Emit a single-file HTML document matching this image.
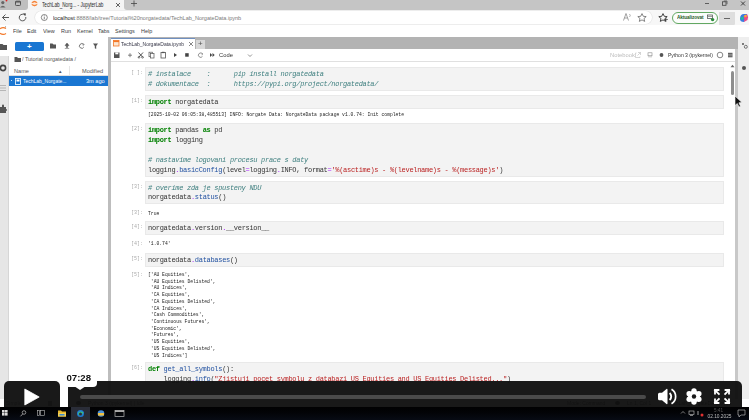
<!DOCTYPE html>
<html><head><meta charset="utf-8">
<style>
*{margin:0;padding:0;box-sizing:border-box}
html,body{width:749px;height:420px;overflow:hidden;background:#fff;font-family:"Liberation Sans",sans-serif;position:relative}
.a{position:absolute}
.mi{position:absolute;top:27px;font-size:6.2px;color:#3a3a3a;white-space:nowrap;transform:scaleX(0.88);transform-origin:0 0}
.cell{position:absolute;left:145px;width:579px;background:#f3f3f3;border:1px solid #e9e9e9}
.ln{position:absolute;left:148px;font-family:"Liberation Mono",monospace;font-size:7px;letter-spacing:-0.3px;color:#333;white-space:pre;line-height:8px;height:8px;transform:scaleY(1.12);transform-origin:0 50%}
.pr{position:absolute;font-family:"Liberation Mono",monospace;font-size:5px;color:#aaa;white-space:pre;line-height:6px}
.o{position:absolute;left:148px;font-family:"Liberation Mono",monospace;font-size:4.7px;color:#222;white-space:pre;line-height:6px}
.kw{color:#008000;font-weight:bold}
.cm{color:#408080;font-style:italic}
.fn{color:#2050a0}
.st{color:#ba2121}
.op{color:#aa22ff}
</style></head><body><div style="position:absolute;left:0;top:0;width:749px;height:420px;filter:blur(0.35px)">
<!-- ============ browser chrome ============ -->
<div class="a" style="left:0;top:0;width:749px;height:10px;background:#f3f3f3"></div>
<div class="a" style="left:124px;top:0;width:625px;height:9.5px;background:#c5c5c5;border-radius:0 0 0 3px"></div>
<div class="a" style="left:0;top:0;width:28px;height:9.5px;background:#bfbfbf;border-radius:0 0 3px 0"></div>
<div class="a" style="left:28px;top:0;width:96px;height:10px;background:#f4f4f4"></div>
<svg class="a" style="left:0;top:0" width="28" height="9" viewBox="0 0 28 9">
 <circle cx="2.8" cy="2.6" r="1.6" fill="#666"/>
 <path d="M0 7.5 Q2.8 3.8 5.6 7.5 Z" fill="#666"/>
 <circle cx="6.5" cy="0.6" r="0.9" fill="#e02020"/>
 <rect x="15.5" y="1.2" width="5" height="4.3" rx="0.8" fill="none" stroke="#555" stroke-width="1"/>
 <rect x="15.5" y="1.2" width="5" height="1.3" fill="#555"/>
</svg>

<svg class="a" style="left:31px;top:0" width="7" height="7" viewBox="0 0 7 7">
 <circle cx="3.5" cy="3.5" r="3" fill="#fde8d8"/>
 <path d="M0.8 2.6 Q3.5 0 6.2 2.6 Q3.5 1.3 0.8 2.6Z" fill="#f37726" stroke="#f37726" stroke-width="0.6"/>
 <path d="M0.8 4.6 Q3.5 7.2 6.2 4.6 Q3.5 5.9 0.8 4.6Z" fill="#f37726" stroke="#f37726" stroke-width="0.6"/>
</svg>
<div class="a" style="left:41.5px;top:0.6px;font-size:6.4px;color:#2a2a2a;white-space:nowrap;transform:scaleX(0.73);transform-origin:0 0">TechLab_Norg... - JupyterLab</div>
<svg class="a" style="left:114.5px;top:1.5px" width="6" height="6" viewBox="0 0 6 6"><path d="M1 1 L5 5 M5 1 L1 5" stroke="#333" stroke-width="0.75"/></svg>

<svg class="a" style="left:130px;top:0" width="8" height="8" viewBox="0 0 8 8"><path d="M4 0.5 V6.5 M1 3.5 H7" stroke="#444" stroke-width="0.8"/></svg>
<svg class="a" style="left:700px;top:0" width="49" height="9" viewBox="0 0 49 9">
 <path d="M5 3.5 H9" stroke="#444" stroke-width="0.8"/>
 <rect x="22.5" y="1.8" width="3.5" height="3.5" fill="none" stroke="#444" stroke-width="0.8"/>
 <path d="M23.8 1 H27 V4.2" fill="none" stroke="#444" stroke-width="0.7"/>
 <path d="M41 1.5 L45 5.5 M45 1.5 L41 5.5" stroke="#333" stroke-width="0.9"/>
</svg>
<div class="a" style="left:0;top:9.5px;width:749px;height:15.5px;background:#f7f7f7"></div>
<svg class="a" style="left:0;top:9px" width="35" height="16" viewBox="0 0 35 16">
 <path d="M2.5 8.5 H9 M2.5 8.5 L5.5 5.5 M2.5 8.5 L5.5 11.5" stroke="#444" stroke-width="0.9" fill="none"/>
 <path d="M25.8 8 A3.3 3.3 0 1 1 23.6 5.4" stroke="#444" stroke-width="0.9" fill="none"/>
 <path d="M23 4.2 L26 4.6 L25.2 7.2Z" fill="#444"/>
</svg>
<div class="a" style="left:35px;top:11px;width:617px;height:13px;background:#fff;border-radius:6.5px;box-shadow:0 0 0 0.6px #e4e4e4"></div>
<svg class="a" style="left:40px;top:13px" width="9" height="9" viewBox="0 0 9 9">
 <circle cx="4.3" cy="4.5" r="3" fill="none" stroke="#555" stroke-width="0.7"/>
 <path d="M4.3 3.6 V6.3" stroke="#555" stroke-width="0.7"/>
 <circle cx="4.3" cy="2.7" r="0.4" fill="#555"/>
</svg>
<div class="a" style="left:53px;top:14px;font-size:6.1px;color:#7a7a7a;white-space:nowrap;transform:scaleX(0.91);transform-origin:0 0"><span style="color:#1a1a1a">localhost</span>:8888/lab/tree/Tutorial%20norgatedata/TechLab_NorgateData.ipynb</div>
<svg class="a" style="left:620px;top:11px" width="130" height="14" viewBox="0 0 130 14">
 <path d="M3.5 9.5 L6 2.5 L8.5 9.5 M4.5 7 H7.5" stroke="#666" stroke-width="0.6" fill="none"/>
 <path d="M9.5 3 Q11 4.5 9.5 6" stroke="#666" stroke-width="0.5" fill="none"/>
 <path d="M22 2.6 L23.3 5.3 L26.2 5.6 L24 7.5 L24.7 10.4 L22 8.9 L19.3 10.4 L20 7.5 L17.8 5.6 L20.7 5.3 Z" fill="none" stroke="#555" stroke-width="0.7"/>
 <path d="M43 2.6 L44.3 5.3 L47.2 5.6 L45 7.5 L45.7 10.4 L43 8.9 L40.3 10.4 L41 7.5 L38.8 5.6 L41.7 5.3 Z" fill="none" stroke="#333" stroke-width="0.9"/>
 <path d="M44 8.5 H48 M46 6.5 V10.5" stroke="#333" stroke-width="0.6"/>
</svg>
<div class="a" style="left:672px;top:11.5px;width:46px;height:12px;border:0.8px solid #62a862;border-radius:6px;background:#fbfdfb"></div>
<div class="a" style="left:677px;top:14.3px;font-size:5.6px;font-weight:bold;color:#1f5a1f;white-space:nowrap;letter-spacing:-0.1px;transform:scaleX(0.83);transform-origin:0 0">Aktualizovat</div>
<svg class="a" style="left:707px;top:14px" width="8" height="8" viewBox="0 0 8 8">
 <rect x="0.5" y="1" width="5" height="3.5" fill="none" stroke="#444" stroke-width="0.7"/>
 <path d="M1 2.5 H5" stroke="#444" stroke-width="0.5"/>
 <circle cx="5.6" cy="5.6" r="1.7" fill="#2a8a3a"/>
</svg>
<div class="a" style="left:719px;top:12px;width:16px;height:13px;background:#dedede"></div>
<div class="a" style="left:724px;top:17.5px;width:6px;height:0.7px;background:#666"></div>
<div class="a" style="left:734px;top:24px;width:1px;height:6px;background:#e6e6e6"></div>
<svg class="a" style="left:739px;top:13px" width="10" height="10" viewBox="0 0 10 10">
 <path d="M1 6 Q1 1 5 1 L8 1 Q9 3 7 5 L5 9 Q1 9 1 6Z" fill="#3b7be0"/>
 <path d="M8 1 Q10 4 8.5 7 L5 9 Q6 5 4 4Z" fill="#e84c8a"/>
 <path d="M1 6 Q2 3 5 4 L4 7Z" fill="#22b8a0"/>
 <circle cx="6.5" cy="3" r="1.3" fill="#f8b030"/>
</svg>
<div class="a" style="left:0;top:25px;width:749px;height:12px;background:#fff"></div>
<svg class="a" style="left:0;top:26px" width="7" height="10" viewBox="0 0 7 10">
 <path d="M0 2.8 Q3 0.6 6 2.6" stroke="#f37726" stroke-width="1.2" fill="none"/>
 <path d="M0 7.2 Q3 9.4 6 7.4" stroke="#f37726" stroke-width="1.2" fill="none"/>
 <circle cx="5.5" cy="0.8" r="0.6" fill="#888"/>
</svg>
<div class="mi" style="left:13px">File</div>
<div class="mi" style="left:27px">Edit</div>
<div class="mi" style="left:43px">View</div>
<div class="mi" style="left:61px">Run</div>
<div class="mi" style="left:77px">Kernel</div>
<div class="mi" style="left:98px">Tabs</div>
<div class="mi" style="left:115px">Settings</div>
<div class="mi" style="left:141px">Help</div>

<!-- ============ jupyter layout ============ -->
<div class="a" style="left:0;top:37px;width:9px;height:370px;background:#e6e6e6;border-right:1px solid #d6d6d6"></div>
<div class="a" style="left:0;top:37px;width:9px;height:19px;background:#fff"></div>
<svg class="a" style="left:0;top:37px" width="9" height="90" viewBox="0 0 9 90">
 <path d="M0 7 H2.5 L3.5 8 H7 V13 H0Z" fill="#555"/>
 <circle cx="3" cy="31" r="2.6" fill="none" stroke="#444" stroke-width="1.6"/>
 <path d="M0 48.5 H6 M0 51 H6 M0 53.5 H6" stroke="#aaa" stroke-width="0.8"/>
 <path d="M0 70 H2 V68.5 A1 1 0 0 1 4 68.5 V70 H6 V72 A1 1 0 0 1 6 74 V76 H0Z" fill="#555"/>
</svg>
<div class="a" style="left:9px;top:37px;width:99px;height:370px;background:#fff"></div>
<div class="a" style="left:15px;top:42px;width:29px;height:8.5px;background:#1976d2;border-radius:1.5px"></div>
<div class="a" style="left:27px;top:41.5px;font-size:8px;font-weight:bold;color:#fff;line-height:9px">+</div>
<svg class="a" style="left:48px;top:41px" width="52" height="10" viewBox="0 0 52 10">
 <path d="M2 2.5 H4.5 L5.5 3.5 H8 V7.5 H2Z" fill="#555"/>
 <path d="M19 2 L17 4.5 H18.3 V6.5 H19.7 V4.5 H21Z M16.8 7.5 H21.2" fill="#555" stroke="#555" stroke-width="0.5"/>
 <path d="M35.5 3.5 A2.3 2.3 0 1 0 35.8 6" stroke="#555" stroke-width="0.8" fill="none"/>
 <path d="M34.5 2.5 L36.2 3.3 L35 4.8" stroke="#555" stroke-width="0.6" fill="none"/>
 <path d="M45 2.5 H50 L48.2 5 V8 L46.8 7.3 V5Z" fill="#555"/>
</svg>
<svg class="a" style="left:14px;top:56px" width="8" height="7" viewBox="0 0 8 7">
 <path d="M0.5 1 H3 L4 2 H7 V6 H0.5Z" fill="#555"/>
</svg>
<div class="a" style="left:22px;top:56.2px;font-size:6px;color:#555;white-space:nowrap;transform:scaleX(0.9);transform-origin:0 0">/ Tutorial norgatedata /</div>
<div class="a" style="left:14px;top:68px;font-size:5.6px;color:#555;white-space:nowrap">Name</div>
<div class="a" style="left:58px;top:68.5px;font-size:4.5px;color:#555">&#9650;</div>
<div class="a" style="left:69px;top:66px;width:1px;height:9px;background:#e6e6e6"></div>
<div class="a" style="left:82px;top:68px;font-size:5.6px;color:#555;white-space:nowrap">Modified</div>
<div class="a" style="left:9px;top:75px;width:99px;height:1px;background:#e0e0e0"></div>
<div class="a" style="left:9px;top:76px;width:99px;height:10px;background:#1976d2"></div>
<div class="a" style="left:11px;top:80px;width:1.4px;height:1.4px;background:#fff;border-radius:1px"></div>
<svg class="a" style="left:15px;top:77.5px" width="6" height="7" viewBox="0 0 6 7">
 <rect x="0.5" y="0.5" width="5" height="6" fill="none" stroke="#fff" stroke-width="0.8"/>
 <rect x="1.5" y="1.5" width="3" height="2" fill="#fff"/>
</svg>
<div class="a" style="left:23px;top:78px;font-size:5.6px;color:#fff;white-space:nowrap;transform:scaleX(0.89);transform-origin:0 0">TechLab_Norgate...</div>
<div class="a" style="left:86px;top:78px;font-size:5.6px;color:#fff;white-space:nowrap">3m ago</div>

<div class="a" style="left:108px;top:37px;width:3px;height:370px;background:#bdbdbd"></div>
<div class="a" style="left:111px;top:36.5px;width:627px;height:12.5px;background:#b3b3b3"></div>
<div class="a" style="left:111px;top:38px;width:84px;height:11px;background:#fff;border-top:1.2px solid #6f8fbf"></div>
<svg class="a" style="left:113px;top:40px" width="7" height="7" viewBox="0 0 7 7">
 <rect x="0.5" y="0.5" width="5.5" height="5.5" fill="#fbe5d0" stroke="#f37726" stroke-width="0.8"/>
 <rect x="0.5" y="0.5" width="5.5" height="1.6" fill="#f37726"/>
</svg>
<div class="a" style="left:121px;top:40.8px;font-size:6px;color:#334;white-space:nowrap;transform:scaleX(0.83);transform-origin:0 0">TechLab_NorgateData.ipynb</div>
<svg class="a" style="left:187.5px;top:41px" width="6" height="6" viewBox="0 0 6 6"><path d="M1 1 L5 5 M5 1 L1 5" stroke="#555" stroke-width="0.7"/></svg>
<div class="a" style="left:196px;top:40px;width:9px;height:8.5px;background:#d8d8d8"></div>
<div class="a" style="left:198px;top:39px;font-size:8px;color:#555;line-height:9px">+</div>
<svg class="a" style="left:111px;top:49px" width="150" height="12" viewBox="0 0 150 12">
 <rect x="3" y="3.5" width="5.5" height="5.5" fill="#555"/>
 <rect x="4.3" y="3.5" width="3" height="1.8" fill="#fff"/>
 <path d="M17 6.2 H21 M19 4.2 V8.2" stroke="#666" stroke-width="0.8"/>
 <path d="M27.5 3.5 L32 8.5 M32 3.5 L27.5 8.5" stroke="#444" stroke-width="0.9"/>
 <circle cx="28" cy="8.3" r="0.9" fill="none" stroke="#444" stroke-width="0.6"/>
 <circle cx="31.5" cy="8.3" r="0.9" fill="none" stroke="#444" stroke-width="0.6"/>
 <rect x="38" y="3.2" width="3.5" height="4.5" fill="none" stroke="#555" stroke-width="0.7"/>
 <rect x="39.5" y="4.5" width="3.5" height="4.5" fill="#fff" stroke="#555" stroke-width="0.7"/>
 <rect x="50" y="3.5" width="4.5" height="5.5" fill="none" stroke="#555" stroke-width="0.8"/>
 <rect x="51" y="2.8" width="2.5" height="1.3" fill="#555"/>
 <path d="M63 4 L66 6 L63 8Z" fill="#444"/>
 <rect x="74.2" y="4.2" width="3.5" height="3.5" fill="#444"/>
 <path d="M91.5 5 A2.2 2.2 0 1 0 91.5 7.3" stroke="#666" stroke-width="0.7" fill="none"/>
 <path d="M90.8 4 L92 5 L90.5 5.8" stroke="#666" stroke-width="0.5" fill="none"/>
 <path d="M99 4 L101.2 6 L99 8Z M101.5 4 L103.7 6 L101.5 8Z" fill="#444"/>
</svg>
<div class="a" style="left:219px;top:51.7px;font-size:5.8px;color:#333;white-space:nowrap">Code</div>
<svg class="a" style="left:247px;top:53px" width="6" height="5" viewBox="0 0 6 5">
 <path d="M1 1.5 L3 3.5 L5 1.5" stroke="#666" stroke-width="0.7" fill="none"/>
</svg>
<div class="a" style="left:610px;top:51.7px;font-size:5.8px;color:#bbb;white-space:nowrap">Notebook</div>
<svg class="a" style="left:634px;top:49.5px" width="104" height="10" viewBox="0 0 104 10">
 <path d="M2.5 3 H1.5 V7.5 H6 V6.5 M4 2.5 H6.5 V5 M6.5 2.5 L3.5 5.5" stroke="#bbb" stroke-width="0.6" fill="none"/>
 <rect x="14" y="2.8" width="4" height="3" fill="none" stroke="#888" stroke-width="0.6"/>
 <path d="M15 5.8 V7.5 M17 5.8 V7.5" stroke="#888" stroke-width="0.6"/>
 <circle cx="27.5" cy="5" r="1.9" fill="#555"/>
 <circle cx="86" cy="5" r="2.8" fill="none" stroke="#555" stroke-width="0.7"/>
 <rect x="94" y="2.8" width="4.5" height="4.5" fill="#555"/>
 <path d="M94 4.3 H98.5 M94 5.8 H98.5" stroke="#fff" stroke-width="0.4"/>
</svg>
<div class="a" style="left:668px;top:51.7px;font-size:5.8px;color:#333;white-space:nowrap;transform:scaleX(0.87);transform-origin:0 0">Python 3 (ipykernel)</div>
<div class="a" style="left:111px;top:61px;width:625px;height:1px;background:#e0e0e0"></div>
<div class="a" style="left:735px;top:49px;width:3px;height:358px;background:#c8c8c8"></div>
<div class="a" style="left:738px;top:37px;width:11px;height:370px;background:#eeeeee"></div>
<svg class="a" style="left:738px;top:40px" width="11" height="30" viewBox="0 0 11 30">
 <circle cx="5" cy="4" r="1" fill="#555"/>
 <circle cx="7.8" cy="6.8" r="1.5" fill="none" stroke="#555" stroke-width="0.8"/>
 <circle cx="6" cy="28" r="2" fill="#555"/>
</svg>
<svg class="a" style="left:730px;top:64px" width="5" height="4" viewBox="0 0 5 4"><path d="M0.5 3.2 L2.5 0.8 L4.5 3.2Z" fill="#666"/></svg>
<div class="a" style="left:731px;top:70.5px;width:3.2px;height:24px;background:#8e8e8e;border-radius:1.6px"></div>
<svg class="a" style="left:734px;top:94.5px" width="9" height="13" viewBox="0 0 9 13">
 <path d="M1 1 L1 10.5 L3.3 8.5 L5 12 L6.5 11.3 L4.9 7.8 L8 7.6Z" fill="#111" stroke="#fff" stroke-width="0.6"/>
</svg>

<!-- ============ cells ============ -->
<div class="cell" style="top:67px;height:24px"></div>
<div class="pr" style="left:131px;top:70px">[ ]:</div>
<div class="ln" style="top:70px"><span class="cm"># instalace    :      pip install norgatedata</span></div>
<div class="ln" style="top:80px"><span class="cm"># dokumentace  :      https://pypi.org/project/norgatedata/</span></div>

<div class="cell" style="top:95px;height:14px"></div>
<div class="pr" style="left:131px;top:98px">[1]:</div>
<div class="ln" style="top:98px"><span class="kw">import</span> norgatedata</div>
<div class="o" style="top:112.3px">[2025-10-02 06:05:38,485513] INFO: Norgate Data: NorgateData package v1.0.74: Init complete</div>

<div class="cell" style="top:123px;height:54px"></div>
<div class="pr" style="left:131px;top:126px">[2]:</div>
<div class="ln" style="top:126px"><span class="kw">import</span> pandas <span class="kw">as</span> pd</div>
<div class="ln" style="top:136px"><span class="kw">import</span> logging</div>
<div class="ln" style="top:156px"><span class="cm"># nastavime logovani procesu prace s daty</span></div>
<div class="ln" style="top:166px">logging<span class="op">.</span><span class="fn">basicConfig</span>(level<span class="op">=</span>logging<span class="op">.</span>INFO, format<span class="op">=</span><span class="st">'%(asctime)s - %(levelname)s - %(message)s'</span>)</div>

<div class="cell" style="top:181px;height:23px"></div>
<div class="pr" style="left:131px;top:184px">[3]:</div>
<div class="ln" style="top:184px"><span class="cm"># overime zda je spusteny NDU</span></div>
<div class="ln" style="top:193px">norgatedata<span class="op">.</span><span class="fn">status</span>()</div>
<div class="pr" style="left:131px;top:210px">[3]:</div>
<div class="o" style="top:210.5px">True</div>

<div class="cell" style="top:221px;height:14px"></div>
<div class="pr" style="left:131px;top:224px">[4]:</div>
<div class="ln" style="top:224px">norgatedata<span class="op">.</span>version<span class="op">.</span>__version__</div>
<div class="pr" style="left:131px;top:241px">[4]:</div>
<div class="o" style="top:241px">'1.0.74'</div>

<div class="cell" style="top:253px;height:14px"></div>
<div class="pr" style="left:131px;top:256px">[5]:</div>
<div class="ln" style="top:256px">norgatedata<span class="op">.</span><span class="fn">databases</span>()</div>
<div class="pr" style="left:131px;top:272px">[5]:</div>
<div class="o" style="top:272px;line-height:6.72px">['AU Equities',
 'AU Equities Delisted',
 'AU Indices',
 'CA Equities',
 'CA Equities Delisted',
 'CA Indices',
 'Cash Commodities',
 'Continuous Futures',
 'Economic',
 'Futures',
 'US Equities',
 'US Equities Delisted',
 'US Indices']</div>

<div class="cell" style="top:362px;height:40px"></div>
<div class="pr" style="left:131px;top:365px">[6]:</div>
<div class="ln" style="top:365px"><span class="kw">def</span> <span class="fn">get_all_symbols</span>():</div>
<div class="ln" style="top:375px">    logging<span class="op">.</span><span class="fn">info</span>(<span class="st">"Zjistuji pocet symbolu z databazi US Equities and US Equities Delisted..."</span>)</div>

<!-- ============ video player ============ -->
<!-- jupyter status bar (under player) -->
<div class="a" style="left:0;top:399px;width:749px;height:8px;background:#fff"></div>
<div class="a" style="left:6px;top:400px;font-size:5px;color:#444;white-space:nowrap">Simple</div>
<div class="a" style="left:88px;top:400px;font-size:5px;color:#444;white-space:nowrap">Python 3 (ipykernel) | Idle</div>
<div class="a" style="left:567px;top:400px;font-size:5px;color:#333;white-space:nowrap">Mode: Command</div>
<div class="a" style="left:615px;top:400.5px;width:4.5px;height:4.5px;border-radius:50%;background:#444"></div>
<div class="a" style="left:627px;top:400px;font-size:5px;color:#333;white-space:nowrap">Ln 1, Col 1</div>
<div class="a" style="left:668px;top:400px;font-size:5px;color:#333;white-space:nowrap">TechLab_NorgateData.ipynb</div><div class="a" style="left:76px;top:400.5px;width:4.5px;height:4.5px;border-radius:50%;background:#555"></div><div class="a" style="left:48px;top:400.5px;width:4px;height:5px;background:#777"></div>
<div class="a" style="left:68px;top:381px;width:674px;height:26px;background:rgba(16,16,16,0.96);border-radius:5px 5px 0 0"></div>
<div class="a" style="left:4px;top:381px;width:56px;height:26px;background:rgba(16,16,16,0.96);border-radius:5px 5px 0 0"></div>
<svg class="a" style="left:4px;top:381px" width="56" height="26" viewBox="0 0 56 26">
 <path d="M20.8 8 L20.8 24 L35.2 16 Z" fill="#fff" stroke="#fff" stroke-width="0.8" stroke-linejoin="round"/>
</svg>
<div class="a" style="left:80px;top:395px;width:566px;height:3.6px;background:#4a4a4a;border-radius:2px"></div>
<!-- tooltip -->
<div class="a" style="left:63px;top:368px;width:34px;height:19px;background:#fff;border-radius:0 0 4px 4px"></div>
<svg class="a" style="left:74px;top:386px" width="12" height="5" viewBox="0 0 12 5">
 <path d="M0 0 L6 4 L12 0Z" fill="#fff"/>
</svg>
<div class="a" style="left:66.5px;top:372.5px;font-size:9.6px;font-weight:bold;color:#111;white-space:nowrap;line-height:10px">07:28</div>
<!-- right icons -->
<svg class="a" style="left:655px;top:386px" width="80" height="21" viewBox="0 0 80 21">
 <path d="M4.5 6.8 H7 L11.5 3 Q12.5 2.5 12.5 3.8 V17.2 Q12.5 18.5 11.5 18 L7 14.2 H4.5 Q3 14.2 3 12.7 V8.3 Q3 6.8 4.5 6.8Z" fill="#fff"/>
 <path d="M14.6 7 A4.6 4.6 0 0 1 14.6 14" stroke="#fff" stroke-width="1.9" fill="none"/>
 <path d="M16.5 3.2 A8.5 8.5 0 0 1 16.5 17.8" stroke="#fff" stroke-width="1.7" fill="none"/>
 <circle cx="39" cy="10.5" r="6" fill="#fff"/>
 <circle cx="39.00" cy="4.90" r="2.7" fill="#fff"/><circle cx="34.15" cy="7.70" r="2.7" fill="#fff"/><circle cx="34.15" cy="13.30" r="2.7" fill="#fff"/><circle cx="39.00" cy="16.10" r="2.7" fill="#fff"/><circle cx="43.85" cy="13.30" r="2.7" fill="#fff"/><circle cx="43.85" cy="7.70" r="2.7" fill="#fff"/>
 <circle cx="39" cy="10.5" r="2.2" fill="#1a1a1a"/>
 <g stroke="#fff" stroke-width="1.9" fill="none" stroke-linecap="square">
  <path d="M60 4.2 L63.8 8"/><path d="M60 4 V7.5 M60 4 H63.5" stroke-width="1.8"/>
  <path d="M74 4.2 L70.2 8"/><path d="M74 4 V7.5 M74 4 H70.5" stroke-width="1.8"/>
  <path d="M60 16.8 L63.8 13"/><path d="M60 17 V13.5 M60 17 H63.5" stroke-width="1.8"/>
  <path d="M74 16.8 L70.2 13"/><path d="M74 17 V13.5 M74 17 H70.5" stroke-width="1.8"/>
 </g>
</svg>
<!-- taskbar -->
<div class="a" style="left:0;top:407px;width:749px;height:13px;background:linear-gradient(#010102 0,#020306 40%,#070b14 100%)"></div>
<svg class="a" style="left:0;top:407px" width="749" height="13" viewBox="0 0 749 13">
 <rect x="2" y="3" width="2.6" height="2.6" fill="#ddd"/><rect x="5" y="3" width="2.6" height="2.6" fill="#ddd"/>
 <rect x="2" y="6" width="2.6" height="2.6" fill="#ddd"/><rect x="5" y="6" width="2.6" height="2.6" fill="#ddd"/>
 <circle cx="24" cy="5.5" r="1.8" fill="none" stroke="#bbb" stroke-width="0.7"/>
 <path d="M22.8 6.8 L20.5 9.3" stroke="#bbb" stroke-width="0.8"/>
 <rect x="37.5" y="3.5" width="2" height="5" fill="none" stroke="#bbb" stroke-width="0.6"/>
 <rect x="40.5" y="3.5" width="4" height="5" fill="none" stroke="#bbb" stroke-width="0.6"/>
 <path d="M58 3.5 H61 L62 4.5 H66 V9.5 H58Z" fill="#e8b830"/>
 <path d="M58 6 H66 V9.5 H58Z" fill="#f4cf50"/>
 <rect x="59.5" y="7" width="5" height="1.5" fill="#3a8ad0"/>
 <rect x="71" y="0" width="19" height="13" fill="#2a2d38"/>
 <circle cx="80.5" cy="6.5" r="3.5" fill="#1e7ad4"/>
 <path d="M78 6 Q80 3.5 83.5 5.5 Q82 9 78.5 8" fill="#3ac080"/>
 <circle cx="80.5" cy="7" r="1.5" fill="#2a2d38"/>
 <circle cx="101" cy="6.5" r="3.3" fill="#4a90d8"/>
 <path d="M98 6 H104 V8.5 H98Z" fill="#f0c040"/>
 <rect x="115" y="3.5" width="9" height="6" fill="none" stroke="#bbb" stroke-width="0.7"/>
 <rect x="115" y="3.5" width="9" height="1.4" fill="#bbb"/>
 <path d="M681 6.5 L683 4.5 L685 6.5" stroke="#ccc" stroke-width="0.6" fill="none"/>
 <rect x="689" y="4" width="5" height="3.5" fill="none" stroke="#ccc" stroke-width="0.6"/>
 <path d="M690 8.5 H693" stroke="#ccc" stroke-width="0.6"/>
 <path d="M698 4 V8" stroke="#ccc" stroke-width="0.8"/>
 <circle cx="702" cy="8" r="1.5" fill="#e03030"/>
 <path d="M738 3 H745 V8 H741 L739 10 V8 H738Z" fill="none" stroke="#ccc" stroke-width="0.6"/>
</svg>
<div class="a" style="left:707.5px;top:413.5px;font-size:4.8px;color:#bbb;white-space:nowrap">02.10.2025</div>
<div class="a" style="left:714px;top:407.5px;font-size:4.6px;color:#555;white-space:nowrap">5:41</div>
</div></body></html>
